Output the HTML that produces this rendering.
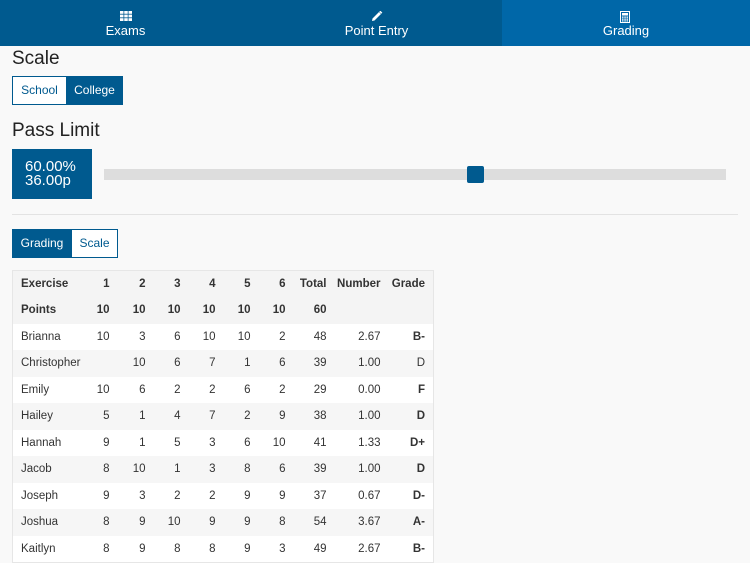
<!DOCTYPE html>
<html><head><meta charset="utf-8"><style>
*{margin:0;padding:0;box-sizing:border-box}
body{width:750px;height:548px;overflow:hidden;background:#f9f9f9;font-family:"Liberation Sans",sans-serif;color:#333;position:relative}
.nav{position:absolute;top:0;left:0;width:750px;height:46px;background:#005a8f;display:flex}
.tab{width:251px;height:46px;color:#fff;text-align:center;position:relative;font-size:13px}
.tab.act{background:#0067a8;width:248px}
.tab svg{position:absolute;top:11px;left:50%;margin-left:-6px}
.tab span{position:absolute;top:23px;left:0;right:0}
h2{position:absolute;font-weight:normal;font-size:19px;color:#222}
.btn{position:absolute;height:29px;border:1px solid #005a8f;font-size:12px;line-height:27px;text-align:center;color:#005a8f;background:#fff}
.btn.on{background:#005a8f;color:#fff}
table{position:absolute;left:12px;top:270px;width:421px;border-collapse:collapse;table-layout:fixed;font-size:11.5px;border:1px solid #e6e6e6;background:#fff}
td{height:26.5px;text-align:right;padding-right:8px;white-space:nowrap}
td:first-child{text-align:left;padding-left:8px}
tr:nth-child(-n+2) td{font-weight:bold;background:#f4f4f4}
tr:nth-child(2n+4) td{background:#f6f6f6}
b{font-weight:bold}
</style></head><body>
<div class="nav">
<div class="tab"><svg width="12" height="10" viewBox="0 0 12 10"><g fill="#fff"><rect x="0" y="0" width="3.5" height="2.8"/><rect x="4.25" y="0" width="3.5" height="2.8"/><rect x="8.5" y="0" width="3.5" height="2.8"/><rect x="0" y="3.6" width="3.5" height="2.8"/><rect x="4.25" y="3.6" width="3.5" height="2.8"/><rect x="8.5" y="3.6" width="3.5" height="2.8"/><rect x="0" y="7.2" width="3.5" height="2.8"/><rect x="4.25" y="7.2" width="3.5" height="2.8"/><rect x="8.5" y="7.2" width="3.5" height="2.8"/></g></svg><span>Exams</span></div>
<div class="tab"><svg width="12" height="11" viewBox="0 0 12 11"><path d="M1 10 L1.5 7.5 L8 1 L10 3 L3.5 9.5 Z" fill="#fff"/><path d="M8.8 0.2 L10.8 2.2" stroke="#fff" stroke-width="1.5"/></svg><span>Point Entry</span></div>
<div class="tab act"><svg width="10" height="12" viewBox="0 0 10 12"><rect x="0.5" y="0.5" width="9" height="11" fill="none" stroke="#fff"/><rect x="2" y="2" width="6" height="2.5" fill="#fff"/><g fill="#fff"><rect x="2" y="5.5" width="1.5" height="1.3"/><rect x="4.3" y="5.5" width="1.5" height="1.3"/><rect x="6.5" y="5.5" width="1.5" height="1.3"/><rect x="2" y="7.5" width="1.5" height="1.3"/><rect x="4.3" y="7.5" width="1.5" height="1.3"/><rect x="6.5" y="7.5" width="1.5" height="1.3"/><rect x="2" y="9.3" width="1.5" height="1.2"/><rect x="4.3" y="9.3" width="1.5" height="1.2"/><rect x="6.5" y="9.3" width="1.5" height="1.2"/></g></svg><span>Grading</span></div>
</div>
<h2 style="left:12px;top:48px">Scale</h2>
<div class="btn" style="left:12px;top:76px;width:55px">School</div>
<div class="btn on" style="left:66px;top:76px;width:57px">College</div>
<h2 style="left:12px;top:120px">Pass Limit</h2>
<div style="position:absolute;left:12px;top:149px;width:80px;height:50px;background:#005a8f;color:#fff;font-size:15px;line-height:14px;padding:11px 0 0 13px">60.00%<br>36.00p</div>
<div style="position:absolute;left:104px;top:169px;width:622px;height:11px;background:#dddddd"></div>
<div style="position:absolute;left:467px;top:166px;width:17px;height:17px;background:#005a8f;border-radius:2px"></div>
<div style="position:absolute;left:12px;top:214px;width:726px;height:1px;background:#e3e3e3"></div>
<div class="btn on" style="left:12px;top:229px;width:60px">Grading</div>
<div class="btn" style="left:71px;top:229px;width:47px">Scale</div>
<table>
<colgroup><col style="width:68px"><col style="width:37px"><col style="width:36px"><col style="width:35px"><col style="width:35px"><col style="width:35px"><col style="width:35px"><col style="width:41px"><col style="width:54px"><col style="width:45px"></colgroup>
<tr><td>Exercise</td><td>1</td><td>2</td><td>3</td><td>4</td><td>5</td><td>6</td><td>Total</td><td>Number</td><td>Grade</td></tr>
<tr><td>Points</td><td>10</td><td>10</td><td>10</td><td>10</td><td>10</td><td>10</td><td>60</td><td></td><td></td></tr>
<tr><td>Brianna</td><td>10</td><td>3</td><td>6</td><td>10</td><td>10</td><td>2</td><td>48</td><td>2.67</td><td><b>B-</b></td></tr>
<tr><td>Christopher</td><td></td><td>10</td><td>6</td><td>7</td><td>1</td><td>6</td><td>39</td><td>1.00</td><td>D</td></tr>
<tr><td>Emily</td><td>10</td><td>6</td><td>2</td><td>2</td><td>6</td><td>2</td><td>29</td><td>0.00</td><td><b>F</b></td></tr>
<tr><td>Hailey</td><td>5</td><td>1</td><td>4</td><td>7</td><td>2</td><td>9</td><td>38</td><td>1.00</td><td><b>D</b></td></tr>
<tr><td>Hannah</td><td>9</td><td>1</td><td>5</td><td>3</td><td>6</td><td>10</td><td>41</td><td>1.33</td><td><b>D+</b></td></tr>
<tr><td>Jacob</td><td>8</td><td>10</td><td>1</td><td>3</td><td>8</td><td>6</td><td>39</td><td>1.00</td><td><b>D</b></td></tr>
<tr><td>Joseph</td><td>9</td><td>3</td><td>2</td><td>2</td><td>9</td><td>9</td><td>37</td><td>0.67</td><td><b>D-</b></td></tr>
<tr><td>Joshua</td><td>8</td><td>9</td><td>10</td><td>9</td><td>9</td><td>8</td><td>54</td><td>3.67</td><td><b>A-</b></td></tr>
<tr><td>Kaitlyn</td><td>8</td><td>9</td><td>8</td><td>8</td><td>9</td><td>3</td><td>49</td><td>2.67</td><td><b>B-</b></td></tr>
</table>
</body></html>
